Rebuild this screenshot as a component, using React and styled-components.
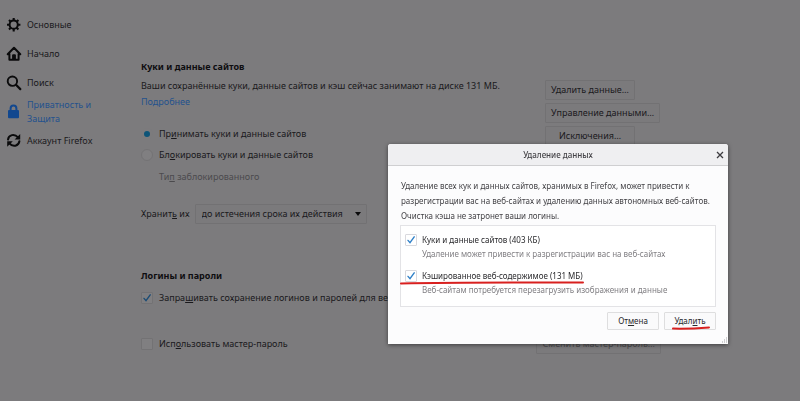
import React, { useState } from 'react';
import styled, { createGlobalStyle } from 'styled-components';

const GlobalStyle = createGlobalStyle`
  *, *::before, *::after {
    box-sizing: border-box;
  }

  body {
    margin: 0;
    background: #7c7b7d;
    color: #1a191c;
    font-family: 'Noto Sans', sans-serif;
    font-size: 9px;
    line-height: 16px;
  }

  button, input, select {
    font: inherit;
    color: inherit;
    margin: 0;
  }
`;

const Page = styled.div`
  display: flex;
  min-height: 100vh;
  overflow: hidden;
`;

const Sidebar = styled.nav`
  flex: 0 0 141px;
  display: flex;
  flex-direction: column;
  gap: 1px;
  padding: 11px 36px 0 6px;
`;

const NavItem = styled.a`
  display: flex;
  align-items: center;
  gap: 5px;
  min-height: 28px;
  line-height: 14px;
  color: ${({ $active }) => ($active ? '#24528d' : '#1a191c')};
  text-decoration: none;

  svg {
    flex: none;
    color: ${({ $active }) => ($active ? '#12488f' : '#0b0b0c')};
  }
`;

const Main = styled.main`
  flex: 1;
  min-width: 0;
  max-width: 520px;
  padding-top: 58px;
`;

const Section = styled.section`
  margin-bottom: ${({ $gap }) => $gap || 0}px;
`;

const Heading = styled.h2`
  margin: 0;
  font-size: 9px;
  line-height: 18px;
  font-weight: 700;
  color: #0e0d10;
`;

const Columns = styled.div`
  display: flex;
  justify-content: space-between;
`;

const Settings = styled.div`
  flex: 1;
  min-width: 0;
  padding-top: 2px;
`;

const Actions = styled.div`
  flex: 0 0 116px;
  display: flex;
  flex-direction: column;
  align-items: flex-start;
  gap: 3px;
  padding-top: 4px;
`;

const ActionButton = styled.button`
  min-width: 90px;
  height: 20px;
  padding: 0 5px;
  border: 1px solid #727173;
  border-radius: 1px;
  background: #7b7a7c;
  line-height: 16px;
  white-space: nowrap;

  &:disabled {
    color: #4b4a4d;
  }
`;

const Text = styled.p`
  margin: 0;
`;

const MoreLink = styled.a`
  color: #24528d;
  text-decoration: none;
`;

const Options = styled.div`
  display: flex;
  flex-direction: column;
  gap: 5px;
  margin-top: 16px;
`;

const Option = styled.label`
  display: flex;
  align-items: center;
  gap: 6px;
  white-space: nowrap;
`;

const Radio = styled.input`
  appearance: none;
  width: 12px;
  height: 12px;
  border: 1px solid #747375;
  border-radius: 50%;
  background: #807f81;

  &:checked {
    border: 3px solid #7c7b7d;
    background: #0d5478;
  }
`;

const BlockedType = styled.div`
  margin-top: 1px;
  padding-left: 18px;
  color: #4b4a4d;
`;

const StoreRow = styled.div`
  display: flex;
  align-items: center;
  gap: 5px;
  margin-top: 19px;
  height: 20px;
`;

const SelectBox = styled.div`
  display: grid;
  align-items: center;

  > * {
    grid-area: 1 / 1;
  }

  svg {
    justify-self: end;
    margin-right: 6px;
    pointer-events: none;
  }
`;

const Select = styled.select`
  appearance: none;
  width: 172px;
  height: 20px;
  padding: 0 6px;
  border: 1px solid #727173;
  border-radius: 1px;
  background: #7b7a7c;
`;

const Tick = styled.span`
  display: grid;
  flex: none;

  > * {
    grid-area: 1 / 1;
    place-self: center;
  }

  svg {
    pointer-events: none;
    visibility: hidden;
  }

  input:checked + svg {
    visibility: visible;
  }
`;

const Box = styled.input`
  appearance: none;
  width: 12px;
  height: 12px;
  border: 1px solid ${({ $dim }) => ($dim ? '#737274' : '#d9d9de')};
  border-radius: 1px;
  background: ${({ $dim }) => ($dim ? '#807f81' : '#ffffff')};
`;

const CheckRow = styled.div`
  display: flex;
  align-items: center;
  justify-content: space-between;
  height: 20px;
  margin-top: ${({ $top }) => $top || 0}px;
`;

const Backdrop = styled.div`
  position: fixed;
  inset: 0;
  display: flex;
  align-items: flex-start;
  justify-content: flex-end;
  padding: 144px 72px 0 0;
`;

const Dialog = styled.div`
  position: relative;
  width: 340px;
  background: #fcfcfd;
  border-radius: 3px 3px 0 0;
  box-shadow: 0 1px 4px rgba(0, 0, 0, 0.5);
  color: #444347;
  font-size: 8px;
  line-height: 14px;
`;

const TitleBar = styled.header`
  display: grid;
  grid-template-columns: 16px 1fr 16px;
  align-items: center;
  height: 22px;
  border-bottom: 1px solid #cfcfd1;
  border-radius: 3px 3px 0 0;
  background: #efeff1;
`;

const DialogTitle = styled.h3`
  grid-column: 2;
  margin: 0;
  text-align: center;
  font-size: 8px;
  font-weight: 500;
`;

const CloseButton = styled.button`
  display: flex;
  justify-self: center;
  padding: 0;
  border: 0;
  background: none;
`;

const DialogBody = styled.div`
  padding: 12px 12px 14px;
`;

const Message = styled.p`
  margin: 0 0 2px;
  padding-left: 1px;
  line-height: 15px;
`;

const Choices = styled.div`
  display: flex;
  flex-direction: column;
  gap: 8px;
  padding: 7px 4px 9px;
  border: 1px solid #e3e3e6;
  background: #ffffff;
`;

const Choice = styled.div`
  position: relative;
`;

const ChoiceLabel = styled.label`
  display: flex;
  align-items: center;
  gap: 5px;
  color: #29292c;
`;

const Hint = styled.p`
  margin: 0;
  padding-left: 17px;
  color: #807f83;
`;

const Footer = styled.footer`
  display: flex;
  justify-content: flex-end;
  gap: 5px;
  margin-top: 5px;
`;

const DialogButton = styled.button`
  position: relative;
  width: 52px;
  height: 18px;
  padding: 0;
  border: 1px solid #dededf;
  border-radius: 1px;
  background: #fafafb;
  color: #29292c;
`;

const Mark = styled.svg`
  position: absolute;
  left: ${({ $left }) => $left}px;
  bottom: ${({ $bottom }) => $bottom}px;
  pointer-events: none;
`;

const Grip = styled.svg`
  position: absolute;
  right: 1px;
  bottom: 1px;
`;

const GearIcon = () => (
  <svg width="16" height="16" viewBox="0 0 16 16" fill="none" stroke="currentColor">
    <circle cx="7.7" cy="7.7" r="4.1" strokeWidth="2" />
    <path
      d="M7.7 1v3M7.7 11.4v3M1 7.7h3M11.4 7.7h3M3 3l2 2M10.4 10.4l2 2M12.4 3l-2 2M5 10.4l-2 2"
      strokeWidth="2.1"
    />
  </svg>
);

const HomeIcon = () => (
  <svg width="16" height="16" viewBox="0 0 16 16">
    <path
      d="M1.7 8.3L8 1.8l6.3 6.5M3.4 7.5v6.3h9.2V7.5"
      fill="none"
      stroke="currentColor"
      strokeWidth="2"
      strokeLinecap="round"
      strokeLinejoin="round"
    />
    <path d="M6.1 13.5V9.2q0-1 1-1h1.8q1 0 1 1v4.3z" fill="currentColor" />
  </svg>
);

const SearchIcon = () => (
  <svg width="16" height="16" viewBox="0 0 16 16" fill="none" stroke="currentColor">
    <circle cx="6.4" cy="6.2" r="4.7" strokeWidth="1.9" />
    <path d="M10 9.8l4.3 4.3" strokeWidth="2.2" strokeLinecap="round" />
  </svg>
);

const LockIcon = () => (
  <svg width="16" height="16" viewBox="0 0 16 16">
    <path d="M4.6 7V4.4a2.9 2.9 0 0 1 5.8 0V7" fill="none" stroke="currentColor" strokeWidth="2" />
    <rect x="2" y="6" width="11" height="8.2" rx="1" fill="currentColor" />
  </svg>
);

const SyncIcon = () => (
  <svg width="16" height="16" viewBox="0 0 16 16">
    <path
      d="M2 6.6C2.6 1.6 8.6.4 12 4.4M13.4 8.2C12.8 13.2 6.8 14.4 3.4 10.4"
      fill="none"
      stroke="currentColor"
      strokeWidth="2"
      strokeLinecap="round"
    />
    <path d="M14.2 1v5.6H8.6zM1.2 13.8V8.2h5.6z" fill="currentColor" />
  </svg>
);

const navItems = [
  { id: 'general', label: 'Основные', Icon: GearIcon },
  { id: 'home', label: 'Начало', Icon: HomeIcon },
  { id: 'search', label: 'Поиск', Icon: SearchIcon },
  { id: 'privacy', label: 'Приватность и Защита', Icon: LockIcon, active: true },
  { id: 'sync', label: 'Аккаунт Firefox', Icon: SyncIcon },
];

const Checkbox = ({ dim, ...props }) => (
  <Tick>
    <Box type="checkbox" $dim={dim} {...props} />
    <svg width="10" height="10" viewBox="0 0 10 10">
      <path
        d="M2 5.4l2 2.3L8.2 1.8"
        fill="none"
        stroke={dim ? '#1b4c75' : '#2f80c8'}
        strokeWidth="1.4"
        strokeLinecap="round"
      />
    </svg>
  </Tick>
);

const App = () => {
  const [policy, setPolicy] = useState('accept');
  const [cookies, setCookies] = useState(true);
  const [cache, setCache] = useState(true);

  return (
    <>
      <GlobalStyle />
      <Page>
        <Sidebar>
          {navItems.map(({ id, label, Icon, active }) => (
            <NavItem key={id} href={`#${id}`} $active={active}>
              <Icon />
              {label}
            </NavItem>
          ))}
        </Sidebar>

        <Main>
          <Section $gap={43}>
            <Heading>Куки и данные сайтов</Heading>
            <Columns>
              <Settings>
                <Text>Ваши сохранённые куки, данные сайтов и кэш сейчас занимают на диске 131 МБ.</Text>
                <MoreLink href="#more">Подробнее</MoreLink>
                <Options>
                  <Option>
                    <Radio
                      type="radio"
                      name="policy"
                      checked={policy === 'accept'}
                      onChange={() => setPolicy('accept')}
                    />
                    <span>Пр<u>и</u>нимать куки и данные сайтов</span>
                  </Option>
                  <Option>
                    <Radio
                      type="radio"
                      name="policy"
                      checked={policy === 'block'}
                      onChange={() => setPolicy('block')}
                    />
                    <span>Бл<u>о</u>кировать куки и данные сайтов</span>
                  </Option>
                  <BlockedType>
                    Ти<u>п</u> заблокированного
                  </BlockedType>
                </Options>
                <StoreRow>
                  <label htmlFor="keep">Хранит<u>ь</u> их</label>
                  <SelectBox>
                    <Select id="keep">
                      <option>до истечения срока их действия</option>
                    </Select>
                    <svg width="6" height="4" viewBox="0 0 6 4">
                      <path d="M0 0h6L3 4z" fill="#0b0b0c" />
                    </svg>
                  </SelectBox>
                </StoreRow>
              </Settings>
              <Actions>
                <ActionButton>Удалить данные…</ActionButton>
                <ActionButton>Управление данными…</ActionButton>
                <ActionButton>Исключения…</ActionButton>
              </Actions>
            </Columns>
          </Section>

          <Section>
            <Heading>Логины и пароли</Heading>
            <CheckRow $top={3}>
              <Option>
                <Checkbox dim defaultChecked />
                <span>Запра<u>ш</u>ивать сохранение логинов и паролей для веб-сайтов</span>
              </Option>
            </CheckRow>
            <CheckRow $top={26}>
              <Option>
                <Checkbox dim />
                <span>Исп<u>о</u>льзовать мастер-пароль</span>
              </Option>
              <ActionButton disabled>Сменить мастер-пароль…</ActionButton>
            </CheckRow>
          </Section>
        </Main>
      </Page>

      <Backdrop>
        <Dialog role="dialog" aria-labelledby="dialog-title">
          <TitleBar>
            <DialogTitle id="dialog-title">Удаление данных</DialogTitle>
            <CloseButton aria-label="Закрыть">
              <svg width="8" height="8" viewBox="0 0 8 8">
                <path d="M1 1l6 6M7 1L1 7" stroke="#3d3c40" strokeWidth="1.3" />
              </svg>
            </CloseButton>
          </TitleBar>
          <DialogBody>
            <Message>
              Удаление всех кук и данных сайтов, хранимых в Firefox, может привести к
              разрегистрации вас на веб-сайтах и удалению данных автономных веб-сайтов.
              Очистка кэша не затронет ваши логины.
            </Message>
            <Choices>
              <Choice>
                <ChoiceLabel>
                  <Checkbox checked={cookies} onChange={(e) => setCookies(e.target.checked)} />
                  <span>Куки и данные сайтов (403 КБ)</span>
                </ChoiceLabel>
                <Hint>Удаление может привести к разрегистрации вас на веб-сайтах</Hint>
              </Choice>
              <Choice>
                <ChoiceLabel>
                  <Checkbox checked={cache} onChange={(e) => setCache(e.target.checked)} />
                  <span>Кэшированное веб-содержимое (131 МБ)</span>
                </ChoiceLabel>
                <Hint>Веб-сайтам потребуется перезагрузить изображения и данные</Hint>
                <Mark $left={-5} $bottom={12} width="184" height="4" viewBox="0 0 184 4">
                  <path d="M1 2.4Q60 1.2 183 1.6" fill="none" stroke="#d8201f" strokeWidth="2" strokeLinecap="round" />
                </Mark>
              </Choice>
            </Choices>
            <Footer>
              <DialogButton>От<u>м</u>ена</DialogButton>
              <DialogButton>
                Удал<u>и</u>ть
                <Mark $left={7} $bottom={-1} width="38" height="4" viewBox="0 0 38 4">
                  <path d="M1 2.6Q18 3 37 1.4" fill="none" stroke="#d8201f" strokeWidth="2" strokeLinecap="round" />
                </Mark>
              </DialogButton>
            </Footer>
          </DialogBody>
          <Grip width="6" height="6" viewBox="0 0 6 6">
            <path d="M5 1h1M3 3h1M5 3h1M1 5h1M3 5h1M5 5h1" stroke="#a3a3a6" />
          </Grip>
        </Dialog>
      </Backdrop>
    </>
  );
};

export default App;
